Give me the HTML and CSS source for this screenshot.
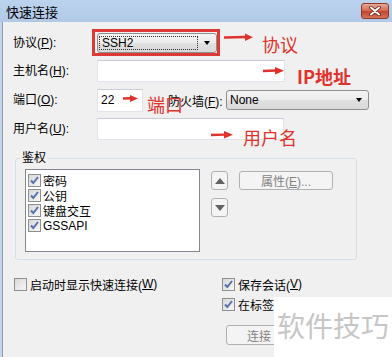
FILE: index.html
```html
<!DOCTYPE html>
<html lang="zh-CN">
<head>
    <meta charset="UTF-8">
    <meta name="viewport" content="width=device-width, initial-scale=1.0">
    <title>快速连接</title>
    <link rel="stylesheet" href="styles.css">
</head>
<body>
    <div class="window">
        <div class="titlebar">
            <span class="title">快速连接</span>
            <span class="close">
                <svg width="14" height="10" viewBox="0 0 14 10">
                    <path d="M3 1.5 L11 8.5 M11 1.5 L3 8.5" stroke="#5a1d12" stroke-width="3.6" stroke-linecap="round"/>
                    <path d="M3 1.5 L11 8.5 M11 1.5 L3 8.5" stroke="#fff" stroke-width="2" stroke-linecap="round"/>
                </svg>
            </span>
        </div>

        <div class="body">
            <div class="row">
                <label class="lbl">协议(<u>P</u>):</label>
                <div class="combo proto">
                    <span class="focus-text">SSH2</span>
                    <span class="caret"></span>
                </div>
            </div>
            <div class="row">
                <label class="lbl">主机名(<u>H</u>):</label>
                <input class="field host" type="text">
            </div>
            <div class="row row-port">
                <label class="lbl">端口(<u>O</u>):</label>
                <input class="field port" type="text" value="22">
                <label class="fw-lbl">防火墙(<u>F</u>):</label>
                <div class="combo fw">
                    <span class="combo-text">None</span>
                    <span class="caret"></span>
                </div>
            </div>
            <div class="row">
                <label class="lbl">用户名(<u>U</u>):</label>
                <input class="field user" type="text">
            </div>

            <fieldset class="group">
                <legend>鉴权</legend>
                <div class="group-inner">
                    <ul class="list">
                        <li><span class="cb on"><svg width="11" height="11" viewBox="0 0 11 11"><path d="M2 5.5 L4.3 8 L9 2" stroke="#5670ad" stroke-width="2" fill="none"/></svg></span>密码</li>
                        <li><span class="cb on"><svg width="11" height="11" viewBox="0 0 11 11"><path d="M2 5.5 L4.3 8 L9 2" stroke="#5670ad" stroke-width="2" fill="none"/></svg></span>公钥</li>
                        <li><span class="cb on"><svg width="11" height="11" viewBox="0 0 11 11"><path d="M2 5.5 L4.3 8 L9 2" stroke="#5670ad" stroke-width="2" fill="none"/></svg></span>键盘交互</li>
                        <li><span class="cb on"><svg width="11" height="11" viewBox="0 0 11 11"><path d="M2 5.5 L4.3 8 L9 2" stroke="#5670ad" stroke-width="2" fill="none"/></svg></span>GSSAPI</li>
                    </ul>
                    <div class="movers">
                        <button class="btn mover"><span class="tri up"></span></button>
                        <button class="btn mover"><span class="tri down"></span></button>
                    </div>
                    <button class="btn prop">属性(<u>E</u>)...</button>
                </div>
            </fieldset>

            <div class="bottom">
                <div class="bottom-left">
                    <label class="check"><span class="cb"></span>启动时显示快速连接(<u>W</u>)</label>
                </div>
                <div class="bottom-right">
                    <label class="check"><span class="cb on"><svg width="11" height="11" viewBox="0 0 11 11"><path d="M2 5.5 L4.3 8 L9 2" stroke="#5670ad" stroke-width="2" fill="none"/></svg></span>保存会话(<u>V</u>)</label>
                    <label class="check"><span class="cb on"><svg width="11" height="11" viewBox="0 0 11 11"><path d="M2 5.5 L4.3 8 L9 2" stroke="#5670ad" stroke-width="2" fill="none"/></svg></span>在标签</label>
                    <div class="actions">
                        <button class="btn action">连接</button>
                    </div>
                </div>
            </div>
        </div>

        <!-- red notes drawn over the dialog -->
        <div class="mark-box"></div>
        <svg class="arrows" width="392" height="357" viewBox="0 0 392 357">
            <path d="M224 37.5 L246 37" stroke="#e0322c" stroke-width="2.4"/>
            <polygon points="245,33.5 253,37.2 245,41" fill="#e0322c"/>
            <path d="M263 71 L276 70.5" stroke="#e0322c" stroke-width="2.4"/>
            <polygon points="275,67 284,70.8 275,74.5" fill="#e0322c"/>
            <path d="M123 98.5 L131 98.3" stroke="#e0322c" stroke-width="2.4"/>
            <polygon points="130,95 138,98.4 130,102" fill="#e0322c"/>
            <path d="M211 135 L225 134.6" stroke="#e0322c" stroke-width="2.4"/>
            <polygon points="224,131 233,134.8 224,138.5" fill="#e0322c"/>
        </svg>
        <span class="note note-proto">协议</span>
        <span class="note note-ip">IP地址</span>
        <span class="note note-port">端口</span>
        <span class="note note-user">用户名</span>

        <div class="watermark">软件技巧</div>
    </div>
</body>
</html>
```

FILE: styles.css
```css
* {
    box-sizing: border-box;
}

body {
    margin: 0;
    background: #f0f0f0;
    font-family: "Liberation Sans", "Noto Sans CJK SC", sans-serif;
    font-size: 12px;
    color: #000;
}

.window {
    position: relative;
    width: 392px;
    height: 357px;
    overflow: hidden;
    background: #f0f0f0;
}

.titlebar {
    height: 22px;
    display: flex;
    align-items: center;
    justify-content: space-between;
    padding: 0 3px 0 6px;
    background: linear-gradient(#bcd3ee, #b1c9e7);
}

.title {
    font-family: "Noto Sans CJK SC", sans-serif;
    font-size: 13px;
}

.close {
    width: 28px;
    height: 16px;
    display: flex;
    align-items: center;
    justify-content: center;
    border: 1px solid #8b3b2c;
    border-radius: 3px;
    background: linear-gradient(#e9a896, #d46a52 48%, #c3442a 52%, #d5735c);
}

.body {
    height: 335px;
    border-left: 2px solid #c3d5ea;
    box-shadow: inset 1px 0 #8d9bab;
    padding: 7px 0 0 11px;
}

.row {
    display: flex;
    align-items: center;
    height: 28px;
}

.row-port {
    height: 30px;
}

.lbl {
    width: 84px;
    line-height: 14px;
}

.combo {
    height: 20px;
    display: flex;
    align-items: center;
    border: 1px solid #8e8f8f;
    border-radius: 3px;
    background: linear-gradient(#f4f4f4, #ececec 50%, #e0e0e0 51%, #d9d9d9);
}

.combo.proto {
    width: 120px;
    padding: 0 6px 0 1px;
}

.focus-text {
    flex: 1;
    height: 14px;
    line-height: 12px;
    border: 1px dotted #333;
    padding-left: 2px;
    margin-right: 6px;
}

.combo.fw {
    width: 143px;
    padding: 0 6px 0 3px;
}

.combo-text {
    flex: 1;
}

.caret {
    width: 0;
    height: 0;
    border-left: 3.5px solid transparent;
    border-right: 3.5px solid transparent;
    border-top: 4px solid #000;
}

.field {
    height: 22px;
    border: 1px solid #e2e3ea;
    border-top-color: #c9ccd4;
    background: #fff;
    padding: 0 3px;
    font: inherit;
}

.host {
    width: 188px;
}

.user {
    width: 187px;
}

.port {
    width: 46px;
    height: 23px;
}

.fw-lbl {
    width: 58px;
    margin-left: 25px;
}

.group {
    width: 342px;
    margin: 8px 0 0 2px;
    padding: 4px 9px 7px 9px;
    border: 1px solid #d5dfe5;
    border-radius: 3px;
}

.group legend {
    margin-left: -5px;
    padding: 0 2px;
    line-height: 14px;
}

.group-inner {
    display: flex;
    align-items: flex-start;
}

.list {
    width: 175px;
    height: 83px;
    margin: 0;
    padding: 3px 0 0 2px;
    list-style: none;
    background: #fff;
    border: 1px solid #828790;
}

.list li {
    height: 15px;
    display: flex;
    align-items: center;
}

.cb {
    width: 13px;
    height: 13px;
    margin-right: 2px;
    flex: none;
    display: flex;
    align-items: center;
    justify-content: center;
    border: 1px solid #8e8f8f;
    background: linear-gradient(135deg, #d8d8d8, #f7f7f7);
}

.movers {
    display: flex;
    flex-direction: column;
    gap: 8px;
    margin: 2px 0 0 11px;
}

.btn {
    border: 1px solid #adb2b5;
    border-radius: 3px;
    background: #f4f4f4;
    color: #838383;
    font: inherit;
    padding: 0;
}

.mover {
    width: 17px;
    height: 19px;
    display: flex;
    align-items: center;
    justify-content: center;
}

.tri {
    width: 0;
    height: 0;
    border-left: 5.5px solid transparent;
    border-right: 5.5px solid transparent;
}

.tri.up {
    border-bottom: 6px solid #626262;
}

.tri.down {
    border-top: 6px solid #626262;
}

.prop {
    width: 94px;
    height: 19px;
    margin: 2px 0 0 11px;
}

.bottom {
    display: flex;
    margin-top: 14px;
}

.bottom-left {
    width: 209px;
    padding-left: 1px;
}

.check {
    height: 20px;
    display: flex;
    align-items: center;
    white-space: nowrap;
}

.check .cb {
    margin-right: 3px;
}

.actions {
    display: flex;
    gap: 8px;
    margin: 11px 0 0 4px;
}

.action {
    width: 75px;
    height: 20px;
    text-align: left;
    padding-left: 20px;
}

.mark-box {
    position: absolute;
    left: 92px;
    top: 29px;
    width: 128px;
    height: 27px;
    border: 3px solid #dd3a35;
}

.arrows {
    position: absolute;
    left: 0;
    top: 0;
}

.note {
    position: absolute;
    font-family: "Noto Sans CJK SC", sans-serif;
    font-size: 18px;
    line-height: 20px;
    color: #e0322c;
}

.note-proto {
    left: 262px;
    top: 34px;
}

.note-ip {
    left: 297px;
    top: 66px;
    font-weight: bold;
}

.note-port {
    left: 147px;
    top: 94px;
}

.note-user {
    left: 243px;
    top: 127px;
}

.watermark {
    position: absolute;
    left: 274px;
    top: 297px;
    right: 0;
    bottom: 0;
    padding: 11px 0 0 3px;
    background: #fff;
    font-family: "Noto Sans CJK SC", sans-serif;
    font-size: 28px;
    line-height: 34px;
    color: #c6c6c6;
    white-space: nowrap;
}
```
